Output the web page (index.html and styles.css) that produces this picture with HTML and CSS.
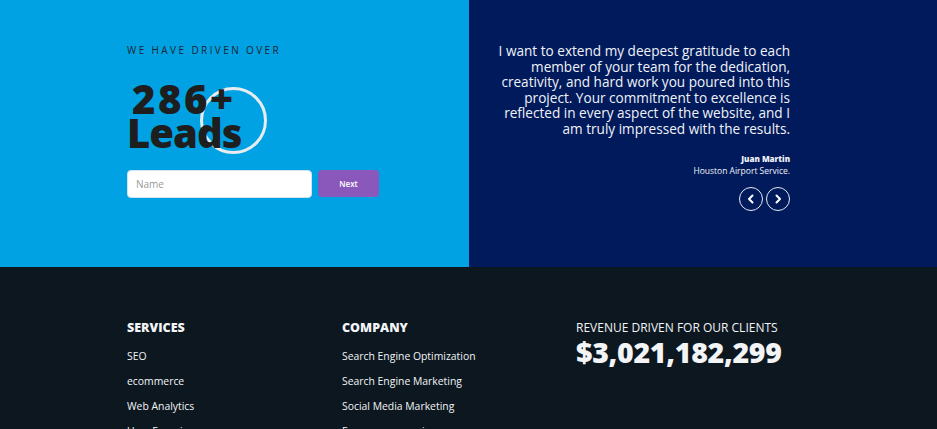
FILE: index.html
```html
<!DOCTYPE html>
<html lang="en">
<head>
<meta charset="utf-8">
<title>Driven</title>
<link rel="stylesheet" href="styles.css">
</head>
<body>
<section class="hero">
  <div class="hero-left">
    <p class="eyebrow">WE HAVE DRIVEN OVER</p>
    <div class="headline">
      <span class="ring"></span>
      <span class="num">286+</span>
      <span class="word">Leads</span>
    </div>
    <form class="lead-form" onsubmit="return false">
      <input class="name-input" type="text" placeholder="Name">
      <button class="next-btn" type="button">Next</button>
    </form>
  </div>
  <div class="hero-right">
    <p class="quote">I want to extend my deepest gratitude to each<br>member of your team for the dedication,<br>creativity, and hard work you poured into this<br>project. Your commitment to excellence is<br>reflected in every aspect of the website, and I<br>am truly impressed with the results.</p>
    <p class="author">Juan Martin</p>
    <p class="company">Houston Airport Service.</p>
    <div class="arrows">
      <button class="arrow" type="button" aria-label="Previous">
        <svg width="12" height="12" viewBox="0 0 12 12"><path d="M7.5 2.5 L4 6 L7.5 9.5" fill="none" stroke="#fff" stroke-width="2" stroke-linecap="round" stroke-linejoin="round"/></svg>
      </button>
      <button class="arrow" type="button" aria-label="Next">
        <svg width="12" height="12" viewBox="0 0 12 12"><path d="M4.5 2.5 L8 6 L4.5 9.5" fill="none" stroke="#fff" stroke-width="2" stroke-linecap="round" stroke-linejoin="round"/></svg>
      </button>
    </div>
  </div>
</section>
<footer class="footer">
  <div class="col">
    <h3 class="col-title">SERVICES</h3>
    <ul class="links">
      <li>SEO</li>
      <li>ecommerce</li>
      <li>Web Analytics</li>
      <li>User Experience</li>
    </ul>
  </div>
  <div class="col">
    <h3 class="col-title">COMPANY</h3>
    <ul class="links">
      <li>Search Engine Optimization</li>
      <li>Search Engine Marketing</li>
      <li>Social Media Marketing</li>
      <li>Ecommerce services</li>
    </ul>
  </div>
  <div class="col">
    <p class="rev-label">REVENUE DRIVEN FOR OUR CLIENTS</p>
    <p class="rev-value">$3,021,182,299</p>
  </div>
</footer>
</body>
</html>
```
FILE: styles.css
```css
* { box-sizing: border-box; }
html, body { margin: 0; padding: 0; }
body {
  font-family: "Open Sans", "Noto Sans", "Liberation Sans", sans-serif;
  background: #0c1720;
  overflow: hidden;
}
p, h3, ul { margin: 0; padding: 0; }

.hero {
  display: flex;
  height: 267px;
}
.hero-left {
  width: 469px;
  background: #00a2e4;
  padding: 44px 0 0 127px;
}
.eyebrow {
  font-size: 10px;
  line-height: 12px;
  letter-spacing: 2.4px;
  color: #1c2530;
}
.headline {
  position: relative;
  margin-top: 26px;
  width: 150px;
  display: flex;
  flex-direction: column;
  font-weight: 800;
  font-size: 40px;
  line-height: 34px;
  color: #1e1e1e;
}
.num { padding-left: 5px; position: relative; letter-spacing: 2.5px; }
.word { position: relative; letter-spacing: -1px; }
.ring {
  position: absolute;
  left: 73px;
  top: 5px;
  width: 67px;
  height: 67px;
  border: 3px solid #e9ecee;
  border-radius: 50%;
}
.lead-form {
  display: flex;
  gap: 6px;
  margin-top: 20px;
}
.name-input {
  width: 185px;
  height: 28px;
  border: 1px solid #cfe3f0;
  border-radius: 4px;
  padding: 0 8px;
  font-family: inherit;
  font-size: 10px;
  color: #333;
  background: #fff;
  outline: none;
}
.name-input::placeholder { color: #9a9a9a; }
.next-btn {
  width: 61px;
  height: 27px;
  border: none;
  border-radius: 4px;
  background: #8a57bb;
  color: #fff;
  font-family: inherit;
  font-size: 8px;
  font-weight: 600;
}

.hero-right {
  flex: 1;
  background: #001a5b;
  padding: 43px 147px 0 0;
  display: flex;
  flex-direction: column;
  align-items: flex-end;
  text-align: right;
  color: #f0f2f8;
}
.quote {
  font-size: 13.6px;
  line-height: 15.6px;
}
.author {
  margin-top: 17px;
  font-size: 8px;
  line-height: 10px;
  font-weight: 800;
}
.company {
  margin-top: 1px;
  font-size: 8.5px;
  line-height: 11px;
}
.arrows {
  display: flex;
  gap: 3px;
  margin-top: 11px;
}
.arrow {
  width: 24px;
  height: 24px;
  padding: 0;
  border: 1px solid #e8ecf5;
  border-radius: 50%;
  background: transparent;
  display: flex;
  align-items: center;
  justify-content: center;
}

.footer {
  display: grid;
  grid-template-columns: 215px 234px 1fr;
  padding: 53px 0 0 127px;
  color: #f2f4f6;
}
.col-title {
  font-size: 12.5px;
  line-height: 16px;
  font-weight: 800;
}
.links {
  list-style: none;
  margin-top: 14px;
  font-size: 10.4px;
  line-height: 13px;
  display: flex;
  flex-direction: column;
  gap: 12px;
}
.rev-label {
  font-size: 12px;
  line-height: 16px;
}
.rev-value {
  font-size: 28.5px;
  line-height: 32px;
  font-weight: 800;
  letter-spacing: -0.3px;
}
```
